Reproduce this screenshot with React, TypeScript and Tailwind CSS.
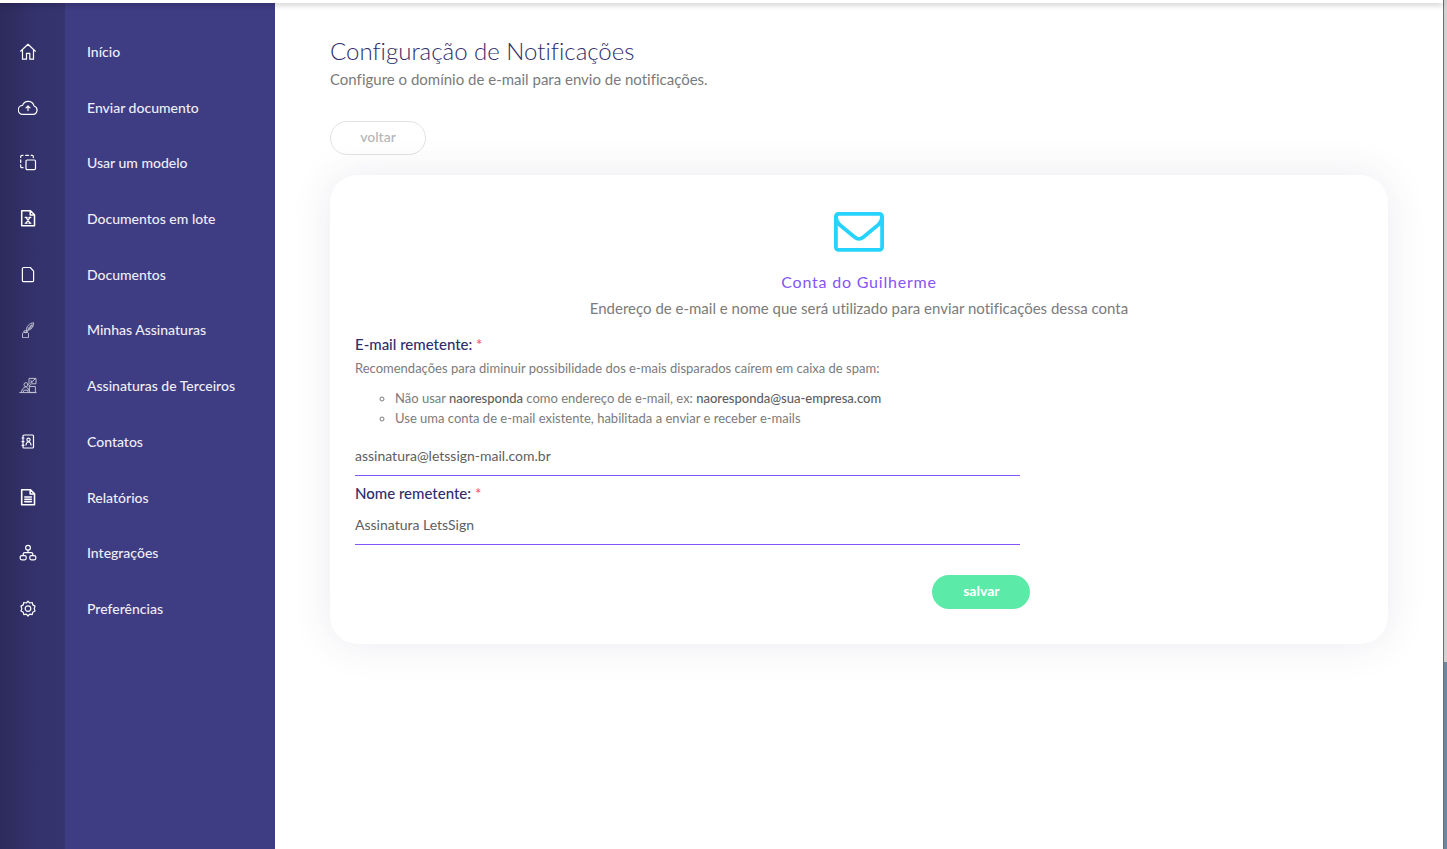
import { ReactNode } from "react";

interface NavItem {
  label: string;
  icon: ReactNode;
}

interface FieldProps {
  id: string;
  label: string;
  type?: string;
  value: string;
  children?: ReactNode;
}

function Icon({ children, thin }: { children: ReactNode; thin?: boolean }) {
  return (
    <svg
      className={thin ? "w-5 h-5 opacity-75" : "w-5 h-5"}
      viewBox="0 0 20 20"
      fill="none"
      stroke="currentColor"
      strokeWidth={thin ? 0.9 : 1.2}
      strokeLinecap="round"
      strokeLinejoin="round"
      aria-hidden="true"
    >
      {children}
    </svg>
  );
}

const navItems: NavItem[] = [
  {
    label: "Início",
    icon: (
      <Icon>
        <path d="M2.6 9.2 10 2.3l7.4 6.9M4.5 8.2v9h4v-5.8h3.3v5.8h3.7v-9" />
      </Icon>
    ),
  },
  {
    label: "Enviar documento",
    icon: (
      <Icon>
        <path d="M5 16.4h10a4.3 4.3 0 0 0 1-8.4 5.9 5.9 0 0 0-11.4-.6A4.5 4.5 0 0 0 5 16.4ZM10 12.6V8M8 9.8l2-2 2 2" />
      </Icon>
    ),
  },
  {
    label: "Usar um modelo",
    icon: (
      <Icon>
        <rect x="8" y="7" width="9.5" height="9.7" rx="1.2" />
        <path d="M15.3 4.6v-1a1.2 1.2 0 0 0-1.2-1.3h-1M10.5 2.3H7.7M5 2.3H4a1.3 1.3 0 0 0-1.3 1.2v1M2.7 6.8v2.6M2.7 11.8v1.6A1.3 1.3 0 0 0 4 14.7h1" />
      </Icon>
    ),
  },
  {
    label: "Documentos em lote",
    icon: (
      <Icon>
        <path strokeWidth="1.5" d="M3.7 1.8h8.8l4 4v10.9H3.7ZM12.2 2v4h4" />
        <path strokeWidth="1.3" d="m8 8.4 4 5.8M12 8.4l-4 5.8M7.2 8.4h1.9M11 8.4h1.8M7.2 14.2h1.9M11 14.2h1.8" />
      </Icon>
    ),
  },
  {
    label: "Documentos",
    icon: (
      <Icon>
        <path d="M5.7 2.5h6.6l3.3 3.6v9.3a1.3 1.3 0 0 1-1.3 1.3H5.7a1.3 1.3 0 0 1-1.3-1.3V3.8a1.3 1.3 0 0 1 1.3-1.3Z" />
      </Icon>
    ),
  },
  {
    label: "Minhas Assinaturas",
    icon: (
      <Icon thin>
        <path d="M4.5 17.3v-4l1-.8h4l1 .8v4ZM6 12.3v-1.5h3v1.5M8.5 10.5C8 6.5 11.5 3 15.6 2.8c-.2 3.5-2 7.2-6 7.4M8 13 14 4.5M10 8h3.5M12 6h3" />
      </Icon>
    ),
  },
  {
    label: "Assinaturas de Terceiros",
    icon: (
      <Icon thin>
        <circle cx="8" cy="8.6" r="2" />
        <path d="M1.8 16.6h16.4M3 16.4c1-3 2.3-5.2 4.6-5.4 1.8.2 2.7 1.6 3.2 3M6 14.2h4v2.2M4.8 14.5l1.2 1.8M11 7.8V2.4h7v5.4h-4.4L11 10M12.4 7l4.7-4M13 4.6l1 2M11.8 10.5h5.6v5.9h-5.6Z" />
      </Icon>
    ),
  },
  {
    label: "Contatos",
    icon: (
      <Icon>
        <rect x="5" y="3" width="10.5" height="13" rx="1" />
        <circle cx="10.5" cy="7.8" r="1.6" />
        <path d="M8 13c.2-2 1-3 2.5-3s2.3 1 2.5 3M4 6h2M4 9.7h2M4 13.3h2" />
      </Icon>
    ),
  },
  {
    label: "Relatórios",
    icon: (
      <Icon>
        <path strokeWidth="1.6" d="M3.7 1.8h8.8l4 4v10.9H3.7ZM12.2 2v4h4M6.8 9h6.6M6.8 11.3h6.6M6.8 13.6h6.6" />
      </Icon>
    ),
  },
  {
    label: "Integrações",
    icon: (
      <Icon>
        <circle cx="10" cy="4.8" r="2.4" />
        <rect x="2.2" y="12.6" width="6" height="4.2" rx="1.5" />
        <rect x="11.8" y="12.6" width="6" height="4.2" rx="1.5" />
        <path d="M10 7.3v2.3M5.2 12.4v-1.3a1.5 1.5 0 0 1 1.5-1.5h6.6a1.5 1.5 0 0 1 1.5 1.5v1.3" />
      </Icon>
    ),
  },
  {
    label: "Preferências",
    icon: (
      <Icon>
        <circle cx="10" cy="9.6" r="2.8" />
        <path d="m10 2.2 1.7 1.8 2.5-.5.6 2.4 2.2 1.2-.8 2.5.8 2.4-2.2 1.2-.6 2.5-2.5-.5-1.7 1.8-1.7-1.8-2.5.5-.6-2.5L3 12l.8-2.4L3 7.1l2.2-1.2.6-2.4 2.5.5Z" />
      </Icon>
    ),
  },
];

function Sidebar() {
  return (
    <nav className="w-[275px] shrink-0 flex flex-col bg-[linear-gradient(to_right,#2c2b5c_0px,#35336e_40px,#36346f_65px,#3e3c82_65px)] pt-[21px] text-white">
      <ul className="grid auto-rows-fr h-[613px]">
        {navItems.map((item) => (
          <li key={item.label} className="flex">
            <a href="#" className="flex flex-1 items-center">
              <span className="w-[65px] pl-[18px]">{item.icon}</span>
              <span className="pl-[22px] text-sm font-medium text-[#eeeef6]">{item.label}</span>
            </a>
          </li>
        ))}
      </ul>
    </nav>
  );
}

function Field({ id, label, type = "text", value, children }: FieldProps) {
  return (
    <div>
      <label htmlFor={id} className="block pt-[7px] text-[15px] leading-5 font-medium text-[#2f2d6b]">
        {label} <span className="text-[#ff5b75]">*</span>
      </label>
      {children}
      <input
        id={id}
        type={type}
        defaultValue={value}
        required
        className="block w-full h-[42px] border-b border-[#8455f6] bg-transparent pt-px text-sm text-[#5e5e5e] outline-none"
      />
    </div>
  );
}

function EnvelopeIcon() {
  return (
    <svg className="mx-auto w-[50px] h-10" viewBox="0 0 50 40" fill="none" stroke="#26d3ff" strokeWidth="3.8" aria-hidden="true">
      <rect x="1.9" y="1.9" width="46.2" height="36" rx="2.6" />
      <path d="M1.9 4c0 4 1.6 7 4.6 9.4l14 11.6c3.4 2.8 5.6 2.8 9 0l14-11.6c3-2.4 4.6-5.4 4.6-9.4" />
    </svg>
  );
}

export default function App() {
  return (
    <div className="flex min-h-screen bg-white font-['Lato',sans-serif] [font-variant-ligatures:none]">
      <div className="flex flex-1 flex-col">
        <header className="relative h-[3px] bg-white shadow-[0_1px_6px_rgba(0,0,0,0.35)]" />
        <div className="flex flex-1">
          <Sidebar />
          <main className="flex-1 px-[55px] pt-8 pb-10">
            <h1 className="text-2xl leading-8 font-light text-[#2f2d6b]">Configuração de Notificações</h1>
            <p className="text-[15px] leading-6 text-[#7b7b7b]">Configure o domínio de e-mail para envio de notificações.</p>
            <button className="mt-[30px] block h-[34px] w-24 rounded-full border border-[#e2e2e2] pb-[2px] text-sm font-medium text-[#b5b5b5]">
              voltar
            </button>

            <section className="mt-5 rounded-[28px] bg-white px-[15px] pt-[37px] pb-[35px] shadow-[0_0_40px_rgba(60,60,110,0.1)]">
              <EnvelopeIcon />
              <h2 className="mt-[18px] text-center text-base leading-6 tracking-wider text-[#8455f6]">Conta do Guilherme</h2>
              <p className="mt-[2px] text-center text-[15px] leading-6 text-[#7b7b7b]">
                Endereço de e-mail e nome que será utilizado para enviar notificações dessa conta
              </p>

              <form className="mt-[7px] w-2/3" onSubmit={(e) => e.preventDefault()}>
                <div className="px-[10px]">
                  <Field id="email" type="email" label="E-mail remetente:" value="assinatura@letssign-mail.com.br">
                    <div className="pt-1 pb-[6px] text-[13px] leading-5 text-[#7b7b7b]">
                      <p>Recomendações para diminuir possibilidade dos e-mais disparados caírem em caixa de spam:</p>
                      <ul className="mt-[10px] list-[circle] pl-10">
                        <li>
                          Não usar <strong className="font-medium text-[#5e5e5e]">naoresponda</strong> como endereço de e-mail, ex:{" "}
                          <strong className="font-medium text-[#5e5e5e]">naoresponda@sua-empresa.com</strong>
                        </li>
                        <li>Use uma conta de e-mail existente, habilitada a enviar e receber e-mails</li>
                      </ul>
                    </div>
                  </Field>
                  <Field id="nome" label="Nome remetente:" value="Assinatura LetsSign" />
                </div>
                <button type="submit" className="mt-[30px] ml-auto block h-[34px] w-[98px] rounded-full bg-[#5ceaa9] pb-[2px] text-sm font-bold text-white">
                  salvar
                </button>
              </form>
            </section>
          </main>
        </div>
      </div>

      <div className="flex w-1 flex-col border-l border-[#6e6e6e]">
        <div className="h-[662px] bg-[#d2d2d2]" />
        <div className="flex-1 bg-[#6c87a0]" />
      </div>
    </div>
  );
}
